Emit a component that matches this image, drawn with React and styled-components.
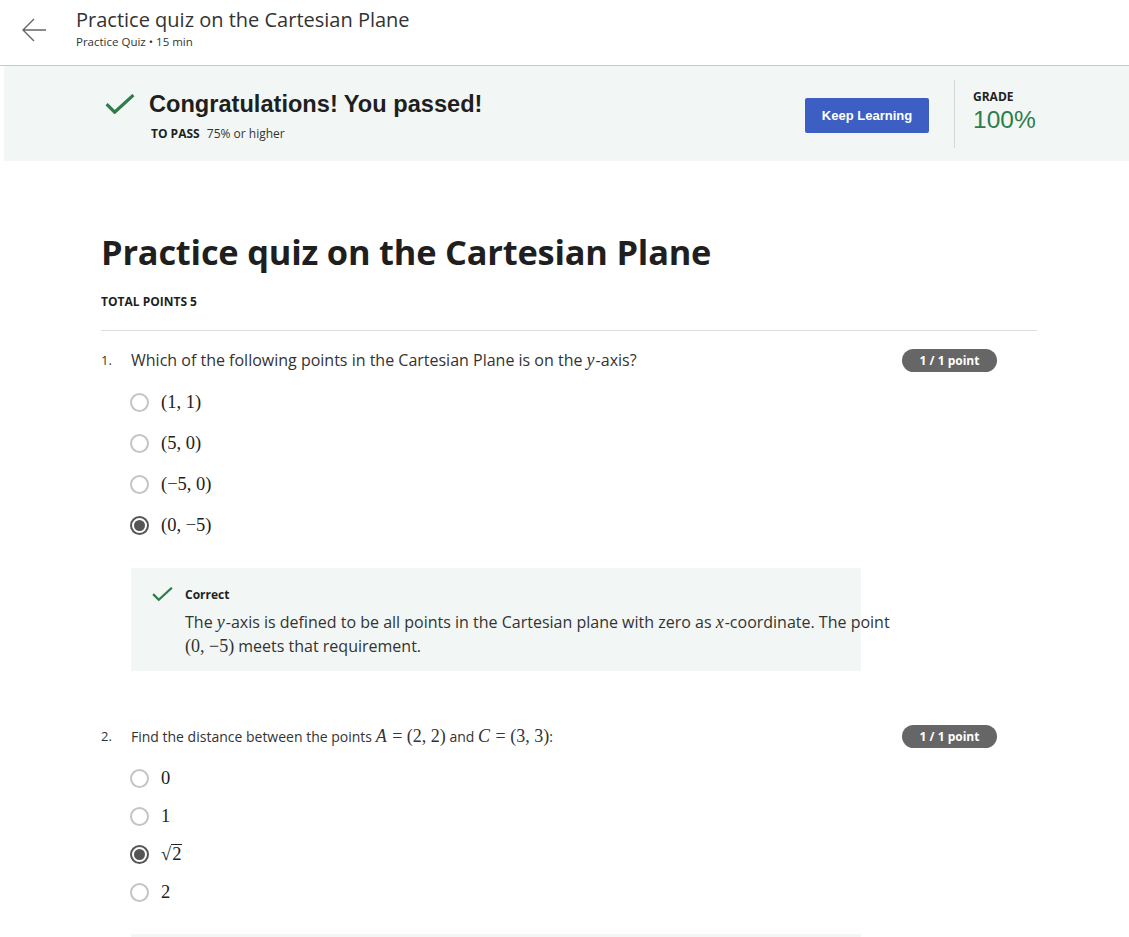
import React from "react";
import styled, { createGlobalStyle } from "styled-components";

const Global = createGlobalStyle`
  html, body { margin: 0; padding: 0; background: #fff; }
  body { font-family: "Open Sans", "Noto Sans", sans-serif; color: #1f1f1f; }
  * { box-sizing: border-box; }
`;

const Page = styled.div`
  width: 1129px;
  min-height: 937px;
  overflow: hidden;
`;

const Header = styled.header`
  height: 66px;
  display: flex;
  align-items: flex-start;
  padding: 8px 0 0 22px;
  border-bottom: 1px solid #c9c9c9;
`;

const BackButton = styled.button`
  border: 0;
  background: none;
  padding: 0;
  margin: 10px 30px 0 0;
  width: 24px;
  height: 24px;
  display: flex;
  cursor: pointer;
`;

const HeaderText = styled.div`
  display: flex;
  flex-direction: column;
`;

const HeaderTitle = styled.div`
  font-size: 20px;
  line-height: 24px;
  color: #333;
`;

const HeaderSub = styled.div`
  font-size: 11.5px;
  line-height: 18px;
  color: #333;
  margin-top: 1px;
`;

const Banner = styled.section`
  margin-left: 4px;
  height: 95px;
  background: #f2f7f5;
  display: flex;
  align-items: center;
  padding-left: 101px;
`;

const BannerLeft = styled.div`
  flex: 1;
  display: flex;
  flex-direction: column;
  align-self: flex-start;
  padding-top: 24px;
`;

const PassedRow = styled.div`
  display: flex;
  align-items: center;
  gap: 14px;
`;

const PassedTitle = styled.h2`
  margin: 0;
  font-family: "Liberation Sans", Arial, sans-serif;
  font-size: 23.6px;
  line-height: 28px;
  font-weight: 700;
  color: #1f1f1f;
`;

const PassLine = styled.div`
  margin: 8px 0 0 46px;
  font-size: 12px;
  line-height: 16px;
  color: #333;
  b { font-weight: 700; margin-right: 4px; color: #1f1f1f; }
`;

const PrimaryButton = styled.button`
  width: 124px;
  height: 35px;
  border: 0;
  border-radius: 2px;
  background: #3d5fc3;
  color: #fff;
  font-family: "Liberation Sans", Arial, sans-serif;
  font-weight: 700;
  font-size: 13px;
  margin-top: 4px;
  cursor: pointer;
`;

const Divider = styled.div`
  width: 1px;
  height: 68px;
  background: #d6d6d6;
  margin: 0 18px 0 25px;
`;

const Grade = styled.div`
  width: 156px;
  align-self: flex-start;
  padding-top: 23px;
  display: flex;
  flex-direction: column;
`;

const GradeLabel = styled.div`
  font-size: 12px;
  font-weight: 700;
  line-height: 16px;
  color: #1f1f1f;
`;

const GradeValue = styled.div`
  font-family: "Liberation Sans", Arial, sans-serif;
  font-size: 24.5px;
  line-height: 30px;
  color: #2e7d4a;
`;

const Main = styled.main`
  width: 936px;
  margin: 69px 0 0 101px;
`;

const QuizTitle = styled.h1`
  margin: 0;
  font-size: 34.4px;
  line-height: 44px;
  font-weight: 700;
  color: #1f1f1f;
  letter-spacing: -0.2px;
`;

const TotalPoints = styled.div`
  margin-top: 20px;
  font-size: 12px;
  line-height: 16px;
  font-weight: 700;
  color: #1f1f1f;
`;

const Rule = styled.hr`
  margin: 20px 0 0;
  border: 0;
  border-top: 1px solid #dcdcdc;
`;

const Question = styled.section`
  margin-top: ${(p) => p.$top}px;
  padding-right: 40px;
`;

const QuestionRow = styled.div`
  display: flex;
  align-items: center;
  height: 24px;
`;

const QNum = styled.span`
  width: 30px;
  font-size: 13px;
  color: #333;
`;

const QText = styled.div`
  flex: 1;
  font-size: ${(p) => p.$size}px;
  color: #333;
  white-space: nowrap;
`;

const Badge = styled.span`
  width: 95px;
  height: 23px;
  border-radius: 12px;
  background: #666;
  color: #fff;
  font-size: 12px;
  font-weight: 700;
  display: flex;
  align-items: center;
  justify-content: center;
`;

const Options = styled.div`
  margin: ${(p) => p.$top}px 0 0 29px;
  display: flex;
  flex-direction: column;
`;

const Option = styled.label`
  display: flex;
  align-items: center;
  height: ${(p) => p.$h}px;
  gap: 12px;
`;

const Radio = styled.span`
  width: 19px;
  height: 19px;
  border-radius: 50%;
  border: 2px solid ${(p) => (p.$checked ? "#555" : "#c4c4c4")};
  display: flex;
  align-items: center;
  justify-content: center;
  &::after {
    content: "";
    width: 11px;
    height: 11px;
    border-radius: 50%;
    background: ${(p) => (p.$checked ? "#555" : "transparent")};
  }
`;

const Math = styled.span`
  font-family: "Liberation Serif", "DejaVu Serif", serif;
  font-size: 18.5px;
  color: #222;
  white-space: nowrap;
`;

const MathVar = styled.i`
  font-family: "Liberation Serif", "DejaVu Serif", serif;
  font-style: italic;
  padding-right: 1px;
`;

const Radical = styled.span`
  display: inline-flex;
  align-items: flex-start;
  span { border-top: 1px solid #222; padding: 0 1px; line-height: 18px; }
`;

const Feedback = styled.div`
  width: 730px;
  margin: ${(p) => p.$top}px 0 0 30px;
  background: #f2f7f5;
  padding: 19px 0 ${(p) => p.$bottom}px 21px;
  display: flex;
  gap: 12px;
  min-height: ${(p) => p.$min}px;
`;

const FeedbackBody = styled.div`
  display: flex;
  flex-direction: column;
`;

const FeedbackLabel = styled.div`
  font-size: 12px;
  font-weight: 700;
  line-height: 16px;
  color: #1f1f1f;
`;

const FeedbackText = styled.div`
  margin-top: 7px;
  font-size: 16px;
  line-height: 24px;
  color: #333;
  white-space: nowrap;
`;

const InlineMath = styled.span`
  font-family: "Liberation Serif", "DejaVu Serif", serif;
  font-size: ${(p) => p.$size || 18}px;
`;

const CheckSvg = styled.svg`
  flex-shrink: 0;
  display: block;
`;

const Arrow = () => (
  <svg width="24" height="24" viewBox="0 0 24 24" fill="none">
    <path d="M24 12H1.5M12 1L1 12l11 11" stroke="#666" strokeWidth="1.4" />
  </svg>
);

const Check = ({ size = 28 }) => (
  <CheckSvg width={size} height={size * 0.68} viewBox="0 0 28 19" fill="none">
    <path d="M1.5 9.5l7.5 7.5L26.5 1" stroke="#2f7d48" strokeWidth="3" />
  </CheckSvg>
);

const q1 = [
  { label: <>(1, 1)</> },
  { label: <>(5, 0)</> },
  { label: <>(−5, 0)</> },
  { label: <>(0, −5)</>, checked: true },
];

const q2 = [
  { label: <>0</> },
  { label: <>1</> },
  { label: <>√<Radical><span>2</span></Radical></>, checked: true },
  { label: <>2</> },
];

export default function App() {
  return (
    <Page>
      <Global />
      <Header>
        <BackButton aria-label="Back"><Arrow /></BackButton>
        <HeaderText>
          <HeaderTitle>Practice quiz on the Cartesian Plane</HeaderTitle>
          <HeaderSub>Practice Quiz • 15 min</HeaderSub>
        </HeaderText>
      </Header>

      <Banner>
        <BannerLeft>
          <PassedRow>
            <Check size={30} />
            <PassedTitle>Congratulations! You passed!</PassedTitle>
          </PassedRow>
          <PassLine><b>TO PASS</b> 75% or higher</PassLine>
        </BannerLeft>
        <PrimaryButton>Keep Learning</PrimaryButton>
        <Divider />
        <Grade>
          <GradeLabel>GRADE</GradeLabel>
          <GradeValue>100%</GradeValue>
        </Grade>
      </Banner>

      <Main>
        <QuizTitle>Practice quiz on the Cartesian Plane</QuizTitle>
        <TotalPoints>TOTAL POINTS 5</TotalPoints>
        <Rule />

        <Question $top={17}>
          <QuestionRow>
            <QNum>1.</QNum>
            <QText $size={16}>
              Which of the following points in the Cartesian Plane is on the{" "}
              <InlineMath><MathVar>y</MathVar></InlineMath>-axis?
            </QText>
            <Badge>1 / 1 point</Badge>
          </QuestionRow>
          <Options $top={10}>
            {q1.map((o, i) => (
              <Option key={i} $h={41}>
                <Radio $checked={o.checked} />
                <Math>{o.label}</Math>
              </Option>
            ))}
          </Options>
          <Feedback $top={22} $bottom={13} $min={103}>
            <Check size={21} />
            <FeedbackBody>
              <FeedbackLabel>Correct</FeedbackLabel>
              <FeedbackText>
                The <InlineMath><MathVar>y</MathVar></InlineMath>-axis is defined to be all points in the Cartesian plane with zero as{" "}
                <InlineMath><MathVar>x</MathVar></InlineMath>-coordinate. The point
                <br />
                <InlineMath>(0, −5)</InlineMath> meets that requirement.
              </FeedbackText>
            </FeedbackBody>
          </Feedback>
        </Question>

        <Question $top={53}>
          <QuestionRow>
            <QNum>2.</QNum>
            <QText $size={14}>
              Find the distance between the points{" "}
              <InlineMath $size={18}><MathVar>A</MathVar> = (2, 2)</InlineMath> and{" "}
              <InlineMath $size={18}><MathVar>C</MathVar> = (3, 3)</InlineMath>:
            </QText>
            <Badge>1 / 1 point</Badge>
          </QuestionRow>
          <Options $top={11}>
            {q2.map((o, i) => (
              <Option key={i} $h={38}>
                <Radio $checked={o.checked} />
                <Math>{o.label}</Math>
              </Option>
            ))}
          </Options>
          <Feedback $top={23} $bottom={13} $min={60} />
        </Question>
      </Main>
    </Page>
  );
}
